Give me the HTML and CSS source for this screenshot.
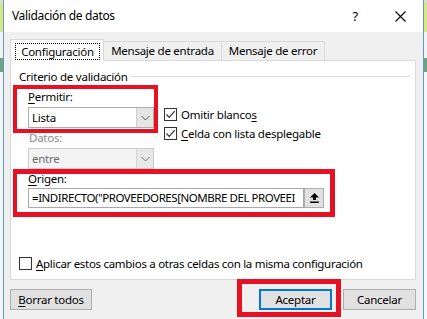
FILE: index.html
```html
<!DOCTYPE html>
<html lang="es">
<head>
<meta charset="utf-8">
<title>Validación de datos</title>
<link rel="stylesheet" href="styles.css">
</head>
<body>
<div class="dialog">
  <div class="titlebar">
    <span class="title">Validación de datos</span>
    <span class="help">?</span>
    <svg class="close" width="11" height="11" viewBox="0 0 11 11"><path d="M0.5 0.5 L10.5 10.5 M10.5 0.5 L0.5 10.5" stroke="#000" stroke-width="1.1" fill="none"/></svg>
  </div>
  <div class="content">
    <div class="tabs">
      <div class="tab active"><span class="focus">Configuración</span></div>
      <div class="tab tab-in">Mensaje de entrada</div>
      <div class="tab tab-err">Mensaje de error</div>
    </div>
    <div class="panel">
      <div class="group-title"><span>Criterio de validación</span><span class="rule"></span></div>
      <div class="row-allow">
        <div class="mark mark-allow">
          <div class="label"><u>P</u>ermitir:</div>
          <div class="combo"><span class="combo-text">Lista</span><span class="drop"><svg width="9" height="6" viewBox="0 0 9 6"><path d="M0.5 1 L4.5 5 L8.5 1" stroke="#555" stroke-width="1" fill="none"/></svg></span></div>
        </div>
        <div class="checks">
          <div class="check"><span class="box"><svg width="11" height="11" viewBox="0 0 11 11"><path d="M1.5 5.5 L4.2 8.3 L9.8 2.2" stroke="#333" stroke-width="1.2" fill="none"/></svg></span>Omitir blanco<u>s</u></div>
          <div class="check"><span class="box"><svg width="11" height="11" viewBox="0 0 11 11"><path d="M1.5 5.5 L4.2 8.3 L9.8 2.2" stroke="#333" stroke-width="1.2" fill="none"/></svg></span><u>C</u>elda con lista desplegable</div>
        </div>
      </div>
      <div class="field-disabled">
        <div class="label">Datos:</div>
        <div class="combo disabled"><span class="combo-text">entre</span><span class="drop"><svg width="9" height="6" viewBox="0 0 9 6"><path d="M0.5 1 L4.5 5 L8.5 1" stroke="#777" stroke-width="1" fill="none"/></svg></span></div>
      </div>
      <div class="mark mark-source">
        <div class="label label-tight"><u>O</u>rigen:</div>
        <div class="source">
          <span class="input">=INDIRECTO("PROVEEDORES[NOMBRE DEL PROVEEI</span>
          <span class="ref-btn"><svg width="9" height="10" viewBox="0 0 9 10"><path d="M4.5 0 L9 4.5 L6 4.5 L6 7 L3 7 L3 4.5 L0 4.5 Z" fill="#000"/><rect x="0" y="8.5" width="9" height="1.5" fill="#000"/></svg></span>
        </div>
      </div>
      <div class="check apply"><span class="box"></span><u>A</u>plicar estos cambios a otras celdas con la misma configuración</div>
    </div>
    <div class="buttons">
      <button class="btn btn-clear"><u>B</u>orrar todos</button>
      <span class="spacer"></span>
      <span class="mark mark-ok"><button class="btn primary">Aceptar</button></span>
      <button class="btn btn-cancel">Cancelar</button>
    </div>
  </div>
</div>
</body>
</html>
```

FILE: styles.css
```css
* { box-sizing: border-box; }
html, body { margin: 0; padding: 0; }
body {
  width: 427px;
  height: 319px;
  overflow: hidden;
  font-family: "Noto Sans", "Open Sans", sans-serif;
  font-size: 11.5px;
  letter-spacing: -0.25px;
  line-height: 16px;
  color: #000;
  background: linear-gradient(to bottom, #dcdcdc 0 3px, #d9e77f 3px 32px, #f4f4f4 32px 58px, #6fa27a 58px 72px, #f6f6f6 72px);
}
u { text-decoration: underline; text-underline-offset: 2px; }

.dialog {
  margin-left: 3px;
  width: 421px;
  height: 319px;
  background: #f0f0f0;
  border-left: 1px solid #5b9bd5;
  border-right: 1px solid #5b9bd5;
  display: flex;
  flex-direction: column;
}

.titlebar {
  height: 32px;
  flex: none;
  background: #fff;
  display: flex;
  align-items: center;
  padding: 0 17px 0 8px;
}
.title { flex: 1; font-size: 12px; letter-spacing: -0.35px; }
.help { font-size: 13px; margin-right: 37px; }
.close { display: block; }

.content {
  padding: 7px 7px 0 6px;
  display: flex;
  flex-direction: column;
}

.tabs {
  display: flex;
  align-items: flex-start;
  margin-bottom: -1px;
}
.tab {
  height: 19px;
  margin-top: 2px;
  margin-left: -1px;
  border: 1px solid #d9d9d9;
  border-bottom: none;
  padding-top: 1px;
  text-align: center;
  background: #f0f0f0;
}
.tab-in { width: 119px; }
.tab-err { width: 104px; }
.tab.active {
  width: 94px;
  height: 22px;
  margin: 0;
  padding: 3px 0 0 4px;
  background: #fff;
  position: relative;
  z-index: 1;
}
.focus {
  display: block;
  width: 85px;
  height: 17px;
  border: 1px dotted #000;
  line-height: 15px;
  text-align: center;
}

.panel {
  background: #fff;
  border: 1px solid #d9d9d9;
  height: 220px;
  display: flex;
  flex-direction: column;
  align-items: flex-start;
  padding-top: 8px;
}
.group-title {
  display: flex;
  align-self: stretch;
  padding: 0 5px 0 8px;
}
.rule {
  flex: 1;
  height: 1px;
  margin: 7px 0 0 2px;
  background: #dcdcdc;
}

.mark { border: 4px solid #e81123; }

.row-allow {
  display: flex;
  align-items: flex-start;
  margin-left: 2px;
}
.mark-allow {
  width: 145px;
  padding: 0 0 1px 11px;
}

.combo {
  display: flex;
  width: 126px;
  height: 21px;
  margin-top: 2px;
  border: 1px solid #adadad;
  background: #fff;
}
.combo-text { flex: 1; padding-left: 3px; line-height: 19px; }
.drop {
  width: 17px;
  background: #e5e5e5;
  border-left: 1px solid #cfcfcf;
  display: flex;
  align-items: center;
  justify-content: center;
}
.combo.disabled { border-color: #cccccc; background: #f4f4f4; color: #6d6d6d; }
.combo.disabled .drop { background: #e8e8e8; border-left-color: #d5d5d5; }

.checks { margin: 20px 0 -10px 6px; }
.check {
  display: flex;
  align-items: center;
  height: 19px;
  white-space: nowrap;
}
.box {
  width: 13px;
  height: 13px;
  flex: none;
  margin-right: 4px;
  border: 1px solid #333;
  background: #fff;
  display: flex;
  align-items: center;
  justify-content: center;
}

.field-disabled {
  margin: -3px 0 0 17px;
}
.field-disabled .label { color: #8a8a8a; padding-left: 1px; }

.mark-source {
  margin-left: 2px;
  border-width: 5px 5px 5px 4px;
  padding: 0 6px 4px 11px;
}
.label-tight { line-height: 10px; }
.source {
  display: flex;
  margin-top: 4px;
  height: 20px;
}
.input {
  width: 276px;
  border: 1px solid #a9a9a9;
  padding-left: 3px;
  line-height: 18px;
  letter-spacing: -0.45px;
  white-space: nowrap;
}
.ref-btn {
  width: 20px;
  border: 1px solid #adadad;
  background: #e1e1e1;
  display: flex;
  align-items: center;
  justify-content: center;
}

.apply { margin: 37px 0 0 8px; letter-spacing: -0.3px; }

.buttons {
  display: flex;
  align-items: flex-start;
  margin-top: -1px;
}
.btn {
  font: inherit;
  letter-spacing: inherit;
  color: #000;
  height: 21px;
  margin-top: 10px;
  padding: 0;
  border: 1px solid #adadad;
  background: #e1e1e1;
  text-align: center;
}
.btn-clear { width: 82px; }
.spacer { flex: 1; }
.mark-ok {
  display: block;
  border-width: 5px;
  padding: 5px 4px 2px 17px;
}
.btn.primary {
  width: 73px;
  margin: 0;
  border: 2px solid #0078d7;
}
.btn-cancel { width: 73px; margin-left: 2px; }
```
